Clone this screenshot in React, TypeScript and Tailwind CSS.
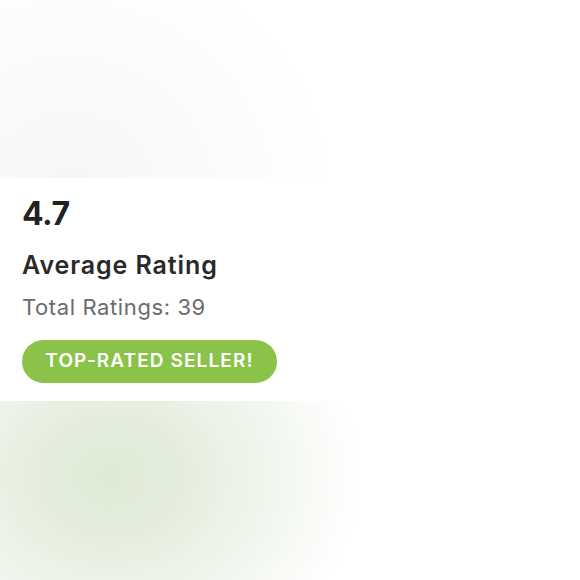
export default function App() {
  return (
    <div className="flex h-[580px] w-full flex-col bg-white font-['Inter',sans-serif]">
      <div className="h-[178px] w-full shrink-0 bg-[radial-gradient(ellipse_260px_250px_at_70px_195px,#f6f6f6_0%,#fafafa_45%,#ffffff_100%)]" />

      <div className="shrink-0 bg-white px-[22px] pt-[20px] pb-[18px]">
        <div className="text-[32px] leading-[32px] font-bold tracking-[-0.5px] text-[#222222]">4.7</div>
        <div className="mt-[23px] text-[25px] leading-[25px] font-semibold tracking-[0.9px] text-[#2a2a2a]">Average Rating</div>
        <div className="mt-[18px] text-[22px] leading-[22px] tracking-[0.6px] text-[#6b6b6b]">Total Ratings: 39</div>
        <div className="mt-[22px] flex h-[43px] w-[255px] items-center justify-center rounded-full bg-[#8bc34a] text-[19px] font-semibold tracking-[1.1px] text-white">
          TOP-RATED SELLER!
        </div>
      </div>

      <div className="w-full flex-1 bg-[radial-gradient(ellipse_250px_210px_at_110px_75px,#dfead5_0%,#e5eede_30%,#f1f6ee_65%,#ffffff_100%)]" />
    </div>
  );
}
